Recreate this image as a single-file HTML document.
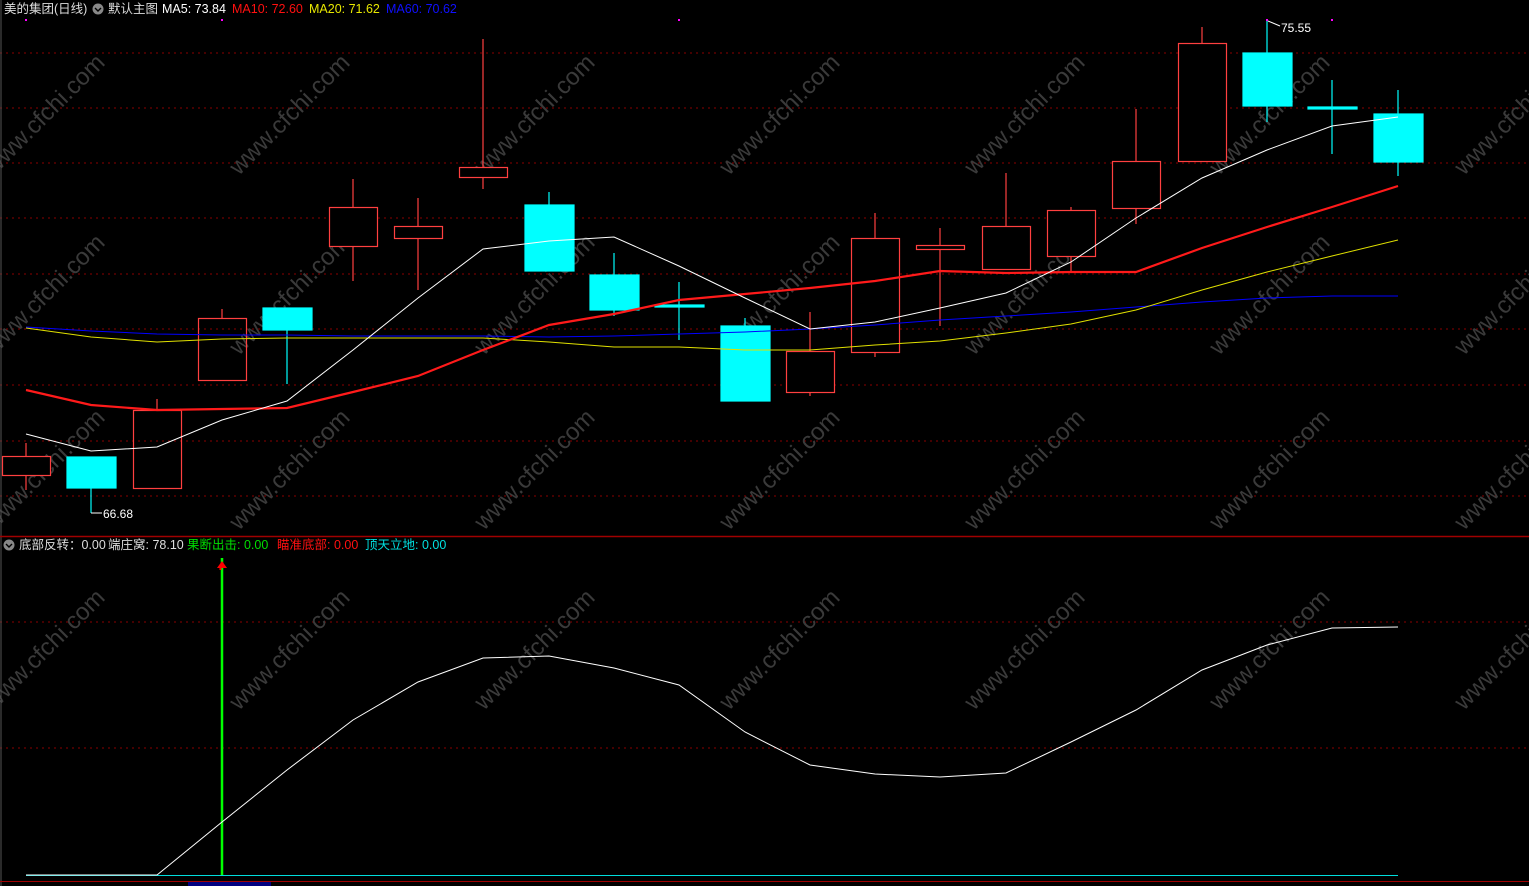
<!DOCTYPE html>
<html><head><meta charset="utf-8"><style>
html,body{margin:0;padding:0;background:#000;width:1529px;height:886px;overflow:hidden}
svg{display:block}
text{font-family:"Liberation Sans","Noto Sans CJK SC",sans-serif}
</style></head><body>
<svg width="1529" height="886" xmlns="http://www.w3.org/2000/svg">
<rect width="1529" height="886" fill="#000"/>
<g stroke="#8a0000" stroke-width="1" stroke-dasharray="2,4">
<line x1="0" y1="53" x2="1529" y2="53"/><line x1="0" y1="108" x2="1529" y2="108"/><line x1="0" y1="163" x2="1529" y2="163"/><line x1="0" y1="218" x2="1529" y2="218"/><line x1="0" y1="274" x2="1529" y2="274"/><line x1="0" y1="329" x2="1529" y2="329"/><line x1="0" y1="385" x2="1529" y2="385"/><line x1="0" y1="441" x2="1529" y2="441"/><line x1="0" y1="496" x2="1529" y2="496"/>
<line x1="0" y1="622" x2="1529" y2="622"/><line x1="0" y1="748" x2="1529" y2="748"/>
</g>
<g fill="#3a3a3a" font-size="24">
<text transform="translate(50,120) rotate(-45)" text-anchor="middle">www.cfchi.com</text>
<text transform="translate(295,120) rotate(-45)" text-anchor="middle">www.cfchi.com</text>
<text transform="translate(540,120) rotate(-45)" text-anchor="middle">www.cfchi.com</text>
<text transform="translate(785,120) rotate(-45)" text-anchor="middle">www.cfchi.com</text>
<text transform="translate(1030,120) rotate(-45)" text-anchor="middle">www.cfchi.com</text>
<text transform="translate(1275,120) rotate(-45)" text-anchor="middle">www.cfchi.com</text>
<text transform="translate(1520,120) rotate(-45)" text-anchor="middle">www.cfchi.com</text>
<text transform="translate(50,300) rotate(-45)" text-anchor="middle">www.cfchi.com</text>
<text transform="translate(295,300) rotate(-45)" text-anchor="middle">www.cfchi.com</text>
<text transform="translate(540,300) rotate(-45)" text-anchor="middle">www.cfchi.com</text>
<text transform="translate(785,300) rotate(-45)" text-anchor="middle">www.cfchi.com</text>
<text transform="translate(1030,300) rotate(-45)" text-anchor="middle">www.cfchi.com</text>
<text transform="translate(1275,300) rotate(-45)" text-anchor="middle">www.cfchi.com</text>
<text transform="translate(1520,300) rotate(-45)" text-anchor="middle">www.cfchi.com</text>
<text transform="translate(50,475) rotate(-45)" text-anchor="middle">www.cfchi.com</text>
<text transform="translate(295,475) rotate(-45)" text-anchor="middle">www.cfchi.com</text>
<text transform="translate(540,475) rotate(-45)" text-anchor="middle">www.cfchi.com</text>
<text transform="translate(785,475) rotate(-45)" text-anchor="middle">www.cfchi.com</text>
<text transform="translate(1030,475) rotate(-45)" text-anchor="middle">www.cfchi.com</text>
<text transform="translate(1275,475) rotate(-45)" text-anchor="middle">www.cfchi.com</text>
<text transform="translate(1520,475) rotate(-45)" text-anchor="middle">www.cfchi.com</text>
<text transform="translate(50,655) rotate(-45)" text-anchor="middle">www.cfchi.com</text>
<text transform="translate(295,655) rotate(-45)" text-anchor="middle">www.cfchi.com</text>
<text transform="translate(540,655) rotate(-45)" text-anchor="middle">www.cfchi.com</text>
<text transform="translate(785,655) rotate(-45)" text-anchor="middle">www.cfchi.com</text>
<text transform="translate(1030,655) rotate(-45)" text-anchor="middle">www.cfchi.com</text>
<text transform="translate(1275,655) rotate(-45)" text-anchor="middle">www.cfchi.com</text>
<text transform="translate(1520,655) rotate(-45)" text-anchor="middle">www.cfchi.com</text>
</g>
<line x1="1" y1="0" x2="1" y2="886" stroke="#555"/>
<line x1="0" y1="536.5" x2="1529" y2="536.5" stroke="#a00000" stroke-width="1.5"/>
<!-- candles -->
<g stroke="#ff4040" fill="none" stroke-width="1.2">
<line x1="26" y1="443" x2="26" y2="490"/><rect x="2.5" y="456.5" width="48" height="19" fill="#000"/>
<line x1="157" y1="399" x2="157" y2="410"/><rect x="133.5" y="410.5" width="48" height="78"/>
<line x1="222" y1="309" x2="222" y2="318"/><rect x="198.5" y="318.5" width="48" height="62"/>
<line x1="353" y1="179" x2="353" y2="281"/><rect x="329.5" y="207.5" width="48" height="39" fill="#000"/>
<line x1="418" y1="198" x2="418" y2="290"/><rect x="394.5" y="226.5" width="48" height="12" fill="#000"/>
<line x1="483" y1="39" x2="483" y2="189"/><rect x="459.5" y="167.5" width="48" height="10" fill="#000"/>
<line x1="810" y1="312" x2="810" y2="396"/><rect x="786.5" y="351.5" width="48" height="41" fill="#000"/>
<line x1="875" y1="213" x2="875" y2="357"/><rect x="851.5" y="238.5" width="48" height="114" fill="#000"/>
<line x1="940" y1="228" x2="940" y2="326"/><rect x="916.5" y="245.5" width="48" height="4" fill="#000"/>
<line x1="1006" y1="173" x2="1006" y2="226"/><rect x="982.5" y="226.5" width="48" height="43" fill="#000"/>
<line x1="1071" y1="207" x2="1071" y2="272"/><rect x="1047.5" y="210.5" width="48" height="46" fill="#000"/>
<line x1="1136" y1="109" x2="1136" y2="224"/><rect x="1112.5" y="161.5" width="48" height="47" fill="#000"/>
<line x1="1202" y1="27" x2="1202" y2="43"/><rect x="1178.5" y="43.5" width="48" height="118" fill="#000"/>
</g>
<g fill="#00ffff" stroke="#00ffff" stroke-width="1.2">
<line x1="91" y1="487" x2="91" y2="513"/><rect x="67" y="457" width="49" height="31"/>
<line x1="287" y1="330" x2="287" y2="384"/><rect x="263" y="308" width="49" height="22"/>
<line x1="549" y1="192" x2="549" y2="205"/><rect x="525" y="205" width="49" height="66"/>
<line x1="614" y1="253" x2="614" y2="316"/><rect x="590" y="275" width="49" height="35"/>
<line x1="679" y1="282" x2="679" y2="340"/><rect x="655" y="305" width="49" height="2"/>
<line x1="745" y1="318" x2="745" y2="326"/><rect x="721" y="326" width="49" height="75"/>
<line x1="1267" y1="20" x2="1267" y2="122"/><rect x="1243" y="53" width="49" height="53"/>
<line x1="1332" y1="80" x2="1332" y2="154"/><rect x="1308" y="107" width="49" height="2"/>
<line x1="1398" y1="90" x2="1398" y2="176"/><rect x="1374" y="114" width="49" height="48"/>
</g>
<!-- MAs -->
<polyline fill="none" stroke="#0000ff" stroke-width="1" points="26,327 91,331 157,334 222,335 287,335 353,336 418,336 483,336 549,337 614,336 679,334 745,332 810,329 875,325 940,320 1006,316 1071,312 1136,307 1202,302 1267,298 1332,296 1398,296"/>
<polyline fill="none" stroke="#e0e000" stroke-width="1" points="26,328 91,337 157,342 222,339 287,338 353,338 418,338 483,338 549,342 614,347 679,347 745,350 810,350 875,345 940,341 1006,333 1071,324 1136,310 1202,290 1267,272 1332,256 1398,240"/>
<polyline fill="none" stroke="#ff1a1a" stroke-width="2.2" points="26,390 91,405 157,410 222,409 287,408 353,392 418,376 483,350 549,325 614,314 679,300 745,294 810,288 875,281 940,271 1006,273 1071,272 1136,272 1202,248 1267,227 1332,207 1398,186"/>
<polyline fill="none" stroke="#fff" stroke-width="1" points="26,434 91,451 157,447 222,420 287,401 353,350 418,298 483,249 549,241 614,237 679,266 745,298 810,329 875,322 940,308 1006,293 1071,262 1136,218 1202,178 1267,150 1332,126 1398,117"/>
<!-- labels -->
<g font-size="12">
<line x1="91" y1="513" x2="102" y2="513" stroke="#fff"/><text x="103" y="518" fill="#fff">66.68</text>
<line x1="1268" y1="21" x2="1280" y2="26" stroke="#fff"/><text x="1281" y="32" fill="#fff">75.55</text>
</g>
<rect x="25" y="19" width="2" height="2" fill="#f0f"/><rect x="221" y="19" width="2" height="2" fill="#f0f"/><rect x="678" y="19" width="2" height="2" fill="#f0f"/><rect x="1266" y="19" width="2" height="2" fill="#f0f"/><rect x="1331" y="19" width="2" height="2" fill="#f0f"/>
<!-- header -->
<g font-size="12.5">
<text x="4" y="13" fill="#ddd">美的集团(日线)</text>
<circle cx="98" cy="9" r="5.5" fill="#888"/><path d="M95,8 L98,11 L101,8" stroke="#000" stroke-width="1.4" fill="none"/>
<text x="108" y="13" fill="#ddd">默认主图</text>
<text x="162" y="13" fill="#fff">MA5: 73.84</text>
<text x="232" y="13" fill="#ff1010">MA10: 72.60</text>
<text x="309" y="13" fill="#e8e800">MA20: 71.62</text>
<text x="386" y="13" fill="#1010ff">MA60: 70.62</text>
</g>
<g font-size="12.5">
<circle cx="9" cy="545" r="5.5" fill="#888"/><path d="M6,544 L9,547 L12,544" stroke="#000" stroke-width="1.4" fill="none"/>
<text x="19" y="549" fill="#ddd">底部反转：0.00</text>
<text x="108" y="549" fill="#ddd">端庄窝: 78.10</text>
<text x="187" y="549" fill="#00dd00">果断出击: 0.00</text>
<text x="277" y="549" fill="#ff1010">瞄准底部: 0.00</text>
<text x="365" y="549" fill="#00e0e0">顶天立地: 0.00</text>
</g>
<!-- lower -->
<line x1="222" y1="558" x2="222" y2="875" stroke="#00ff00" stroke-width="2.5"/>
<path d="M222,561 L217,568 L227,568 Z" fill="#ff0000"/>
<line x1="220.5" y1="566" x2="220.5" y2="570" stroke="#ff0000" stroke-width="2"/>
<line x1="26" y1="875.5" x2="1398" y2="875.5" stroke="#00dddd" stroke-width="1"/>
<polyline fill="none" stroke="#fff" stroke-width="1" points="26,875 157,875 222,822 287,770 353,720 418,682 483,658 549,656 614,668 679,685 745,732 810,765 875,774 940,777 1006,773 1071,742 1136,710 1202,670 1267,645 1332,628 1398,627"/>
<line x1="0" y1="881.5" x2="1529" y2="881.5" stroke="#a00000"/>
<rect x="188" y="882" width="83" height="4" fill="#000080"/>
</svg>
</body></html>
